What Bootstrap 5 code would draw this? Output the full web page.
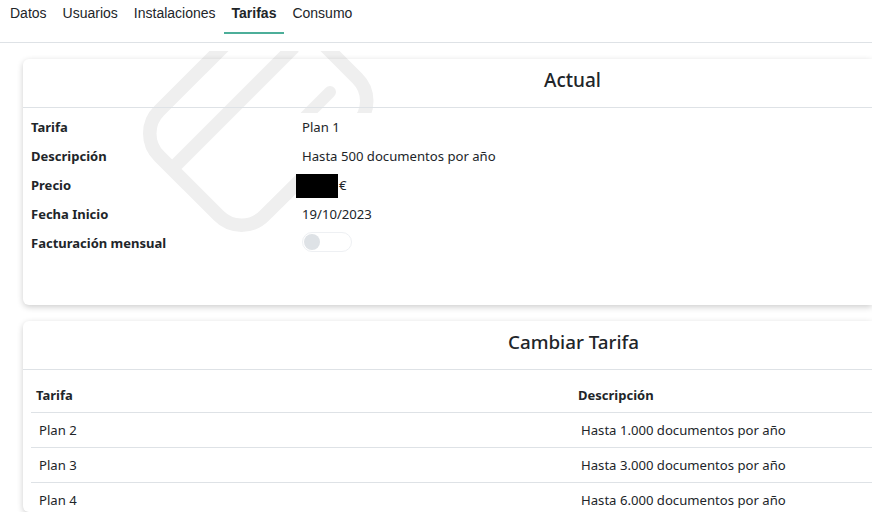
<!DOCTYPE html>
<html lang="es">
<head>
<meta charset="utf-8">
<link href="https://cdn.jsdelivr.net/npm/bootstrap@5.3.0/dist/css/bootstrap.min.css" rel="stylesheet">
<style>
html,body{height:512px;overflow:hidden}
body{font-family:"Noto Sans",sans-serif;font-size:13.13px;color:#212529;background:#fff}
.tabbar{height:43px;border-bottom:1px solid #dee2e6;padding-left:2px;font-family:"Liberation Sans",sans-serif;font-size:14px}
.tabbar a{display:block;height:34px;padding:3px 8px 0;color:#212529;text-decoration:none;border-bottom:2px solid transparent}
.tabbar a.on{font-weight:700;border-bottom-color:#4cae99}
.pagewrap{position:relative;padding:16px 0 0 23px;height:469px}
.panel{background:transparent;border-radius:6px 0 0 6px;box-shadow:0 2px 6px rgba(0,0,0,.2);margin-bottom:16px}
.panel-head{height:49px;border-bottom:1px solid #dee2e6;font-size:19px;font-weight:500;line-height:42px;padding-left:521px}
.panel2{height:191px;overflow:hidden;margin-bottom:0}
.panel2 .panel-head{padding-left:485px;font-size:18.8px}
.info{padding:5px 0 0 8px;height:197px}
.inforow{height:29px;line-height:29px}
.infolabel{width:265px;font-weight:700;font-size:13px}
.infovalue{background:#fff;padding-left:6px}
.redact{display:inline-block;width:42px;height:24px;background:#000;vertical-align:top;margin:3px 1px 0 -6px}
.toggle{display:block;width:50px;height:20px;border:1px solid #eef0f3;border-radius:10px;padding:1px;margin-top:3px}
.toggle i{display:block;width:16px;height:16px;border-radius:50%;background:#dee2e6}
.tarifas{margin:0 0 0 8px;width:841px;--bs-table-bg:transparent;table-layout:fixed}
.tarifas th{height:42px;padding:10px 5px 0;vertical-align:middle;font-weight:700;font-size:13px;border-bottom:1px solid #dee2e6}
.tarifas td{height:35px;padding:3px 8px 0;vertical-align:middle;border-bottom:1px solid #dee2e6}
.c1{width:542px}
.mark-bg{position:absolute;left:140px;top:8px;z-index:-1}
</style>
</head>
<body>
<nav class="tabbar d-flex">
<a href="#">Datos</a><a href="#">Usuarios</a><a href="#">Instalaciones</a><a href="#" class="on">Tarifas</a><a href="#">Consumo</a>
</nav>
<div class="pagewrap">
<svg class="mark-bg" width="240" height="190" viewBox="140 51 240 190" fill="none" stroke="#efefef" stroke-width="13.5" stroke-linecap="round"><path d="M224 46L159.4 110.6A32 32 0 0 0 159.4 156.4L218.6 215.6A32 32 0 0 0 264.4 215.6L357.1 123.9A32 32 0 0 0 357.1 78.1L325 46"/><path d="M172 169L294 47" stroke-linecap="butt"/><path d="M330 92L305 117" stroke-width="12"/></svg>
<section class="panel">
<div class="panel-head">Actual</div>
<div class="info">
<div class="inforow d-flex"><div class="infolabel">Tarifa</div><div class="infovalue flex-grow-1">Plan 1</div></div>
<div class="inforow d-flex"><div class="infolabel">Descripción</div><div class="infovalue flex-grow-1">Hasta 500 documentos por año</div></div>
<div class="inforow d-flex"><div class="infolabel">Precio</div><div class="infovalue flex-grow-1"><span class="redact"></span>€</div></div>
<div class="inforow d-flex"><div class="infolabel">Fecha Inicio</div><div class="infovalue flex-grow-1">19/10/2023</div></div>
<div class="inforow d-flex"><div class="infolabel">Facturación mensual</div><div class="infovalue flex-grow-1"><span class="toggle"><i></i></span></div></div>
</div>
</section>
<section class="panel panel2">
<div class="panel-head">Cambiar Tarifa</div>
<table class="table tarifas mb-0">
<thead><tr><th class="c1">Tarifa</th><th>Descripción</th></tr></thead>
<tbody>
<tr><td>Plan 2</td><td>Hasta 1.000 documentos por año</td></tr>
<tr><td>Plan 3</td><td>Hasta 3.000 documentos por año</td></tr>
<tr><td>Plan 4</td><td>Hasta 6.000 documentos por año</td></tr>
</tbody>
</table>
</section>
</div>
</body>
</html>
